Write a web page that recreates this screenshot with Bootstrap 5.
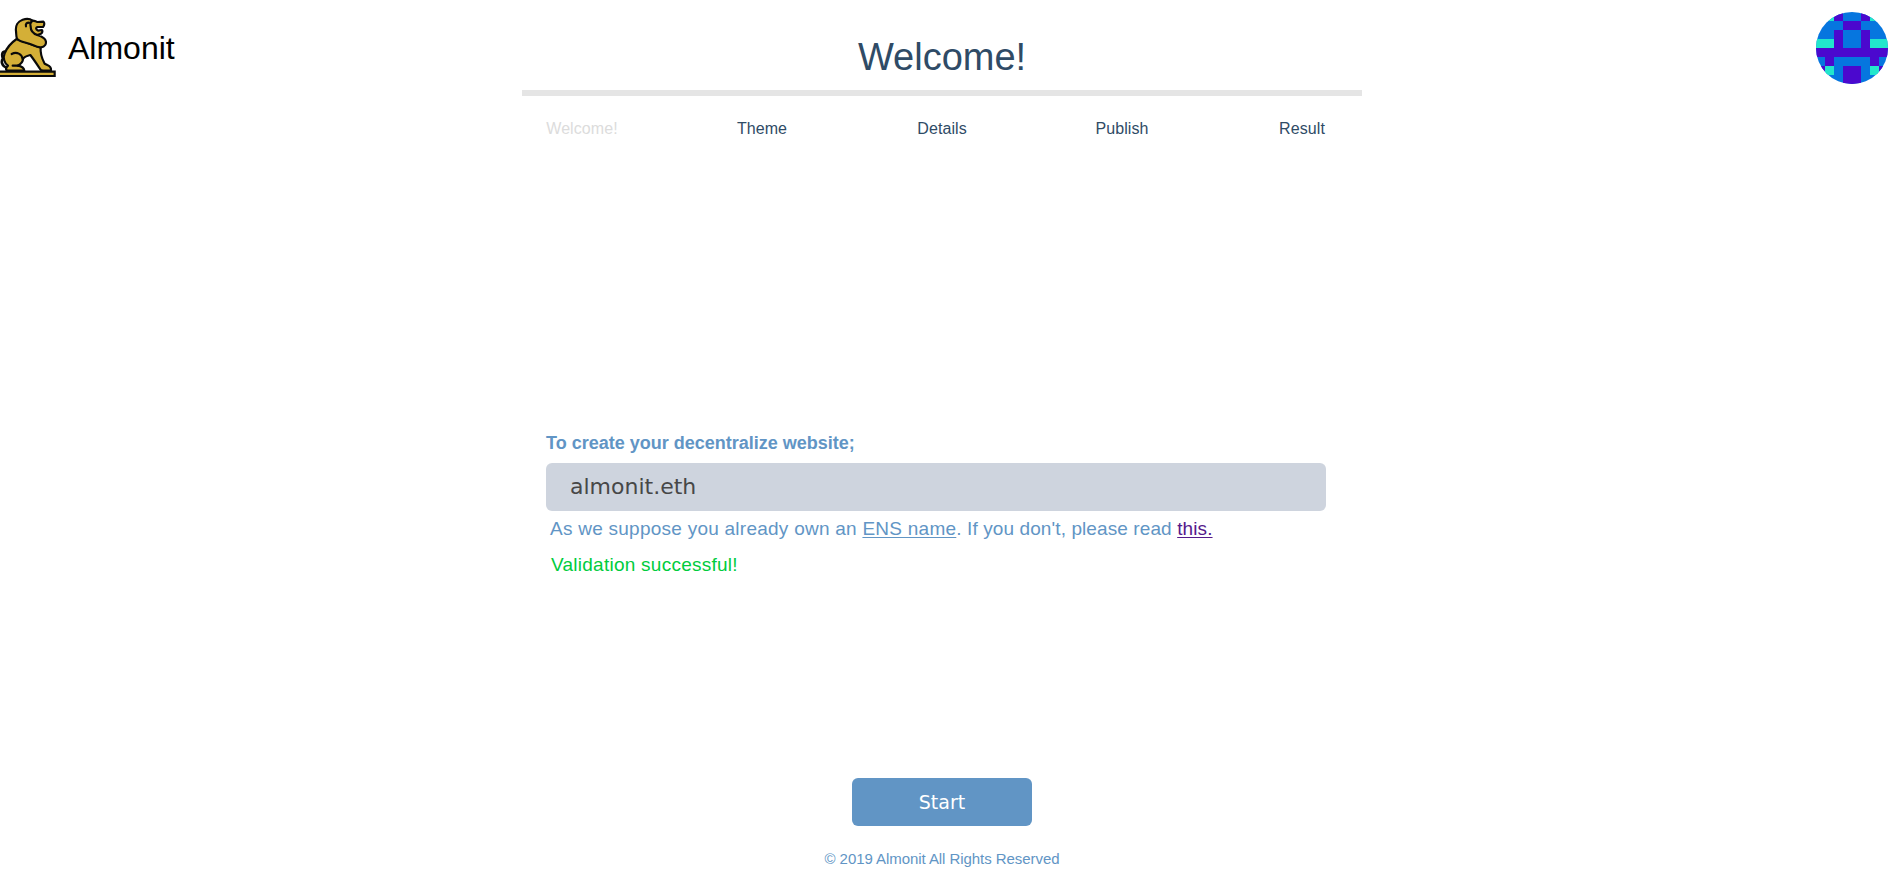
<!DOCTYPE html>
<html lang="en">
<head>
<meta charset="utf-8">
<meta name="viewport" content="width=device-width, initial-scale=1">
<title>Almonit</title>
<link rel="stylesheet" href="https://cdn.jsdelivr.net/npm/bootstrap@5.3.0/dist/css/bootstrap.min.css">
<style>
body { font-family: "Liberation Sans", Arial, sans-serif; color: #6195c5; background: #fff; height: 889px; overflow: hidden; }
.brand-link { color: #000; font-size: 32px; line-height: 36px; gap: 12px; padding-top: 17px; }
.brand-name { padding-top: 13px; }
.user-icon { margin: 12px 12px 0 0; }
.wizard { width: 840px; margin-left: 522px; height: 889px; }
.wizard-title { font-size: 38px; line-height: 44px; color: #2f4b66; height: 90px; padding-top: 35px; }
.wizard-rule { height: 6px; background: #e5e5e5; }
.steps { height: 66px; font-size: 16px; letter-spacing: .08px; color: #2f4b66; }
.step { width: 180px; }
.step.current { color: #dcdcdc; }
.ens-form { margin: 269px 36px 0 24px; }
.ens-label { font-size: 18px; line-height: 24px; height: 32px; }
.ens-input { height: 48px; padding: 0 24px 2px; border: 0; border-radius: 6px; background: #ced4de !important; color: #474747 !important; font: 22px "DejaVu Sans", sans-serif; }
.ens-help { font-size: 19px; letter-spacing: .25px; line-height: 24px; padding: 6px 0 0 4px; }
.ens-help a { color: inherit; text-underline-offset: 2px; }
.ens-help .hint { letter-spacing: .1px; }
.ens-help a.visited-link { color: #551a8b; }
.ens-status { font-size: 19px; letter-spacing: .25px; line-height: 24px; padding: 12px 0 0 5px; color: #00cc3d; }
.start-btn { width: 180px; height: 48px; margin-bottom: 23px; padding: 0 0 1px; border: 0; border-radius: 6px; background: #6195c5; color: #fff; font: 19px "DejaVu Sans", sans-serif; }
.copyright { font-size: 15px; letter-spacing: -.06px; line-height: 20px; margin-bottom: 20px; }
</style>
</head>
<body>
<header class="position-absolute top-0 start-0 w-100 d-flex justify-content-between align-items-start">
  <a class="brand-link d-flex text-decoration-none" href="#">
    <svg width="56" height="61" viewBox="0 51 168 183" fill="#d4af37" stroke="#0a0a0a" stroke-width="6.5" stroke-linejoin="round" stroke-linecap="round" aria-hidden="true">
      <path fill="none" stroke-width="8" d="M14 155C4 157 6 168 9 176C2 184 6 199 20 203"/>
      <path d="M50 117C34 128 20 145 14 160C8 173 13 190 24 197C18 202 17 208 20 212H73C72 204 65 199 53 197C63 192 69 184 69 177C72 170 83 167 91 165C101 178 111 193 119 205C121 210 125 212 130 212H153C154 204 150 198 142 195L134 191C127 178 120 166 122 143Z"/>
      <path fill="none" d="M35 162C50 154 66 162 68 177M53 197H38"/>
      <path d="M97 62C90 56 78 56 68 59C53 64 46 78 48 93C49 102 48 110 51 116C60 126 74 126 88 131C101 136 112 143 123 142C135 141 140 131 137 122C134 112 122 109 112 105L123 101C127 98 128 94 126 90L114 92C107 88 107 83 112 81H129C134 75 134 68 130 65L112 66C107 65 103 61 97 62Z"/>
      <path fill="none" d="M78 79C76 71 80 68 87 68M97 62C91 67 90 73 92 80C92 92 98 100 112 105"/>
      <path stroke-linejoin="miter" d="M-6 215H164V228H-6Z"/>
    </svg>
    <span class="brand-name">Almonit</span>
  </a>
  <svg class="user-icon" width="72" height="72" viewBox="0 0 8 8" role="img" aria-label="Account">
    <clipPath id="round"><circle cx="4" cy="4" r="4"/></clipPath>
    <g clip-path="url(#round)" shape-rendering="crispEdges">
      <path fill="#0676df" d="M0 0h8v8H0z"/>
      <path fill="#4b08ce" d="M2 0h1v1H2zM5 0h1v1H5zM3 1h2v1H3zM2 2h1v2H2zM5 2h1v2H5zM0 4h8v1H0zM1 5h1v1H1zM6 5h1v1H6zM0 6h1v1H0zM7 6h1v1H7zM3 6h2v2H3z"/>
      <path fill="#22e6cc" d="M1 0h1v1H1zM6 0h1v1H6zM0 3h2v1H0zM6 3h2v1H6zM1 6h1v1H1zM6 6h1v1H6z"/>
    </g>
  </svg>
</header>
<main class="wizard d-flex flex-column">
  <h1 class="wizard-title text-center fw-normal m-0">Welcome!</h1>
  <div class="wizard-rule flex-shrink-0"></div>
  <nav class="steps d-flex justify-content-center align-items-center text-center">
    <span class="step current flex-shrink-0">Welcome!</span>
    <span class="step flex-shrink-0">Theme</span>
    <span class="step flex-shrink-0">Details</span>
    <span class="step flex-shrink-0">Publish</span>
    <span class="step flex-shrink-0">Result</span>
  </nav>
  <form class="ens-form">
    <label class="ens-label d-block fw-bold" for="ens">To create your decentralize website;</label>
    <input class="ens-input form-control" id="ens" type="text" value="almonit.eth">
    <div class="ens-help">As we suppose you already own an <a href="#">ENS name</a><span class="hint">. If you don't, please read <a class="visited-link" href="#">this.</a></span></div>
    <div class="ens-status">Validation successful!</div>
  </form>
  <button class="start-btn btn mt-auto mx-auto" type="button">Start</button>
  <footer class="copyright text-center">© 2019 Almonit All Rights Reserved</footer>
</main>
<script src="https://cdn.jsdelivr.net/npm/bootstrap@5.3.0/dist/js/bootstrap.bundle.min.js"></script>
</body>
</html>
